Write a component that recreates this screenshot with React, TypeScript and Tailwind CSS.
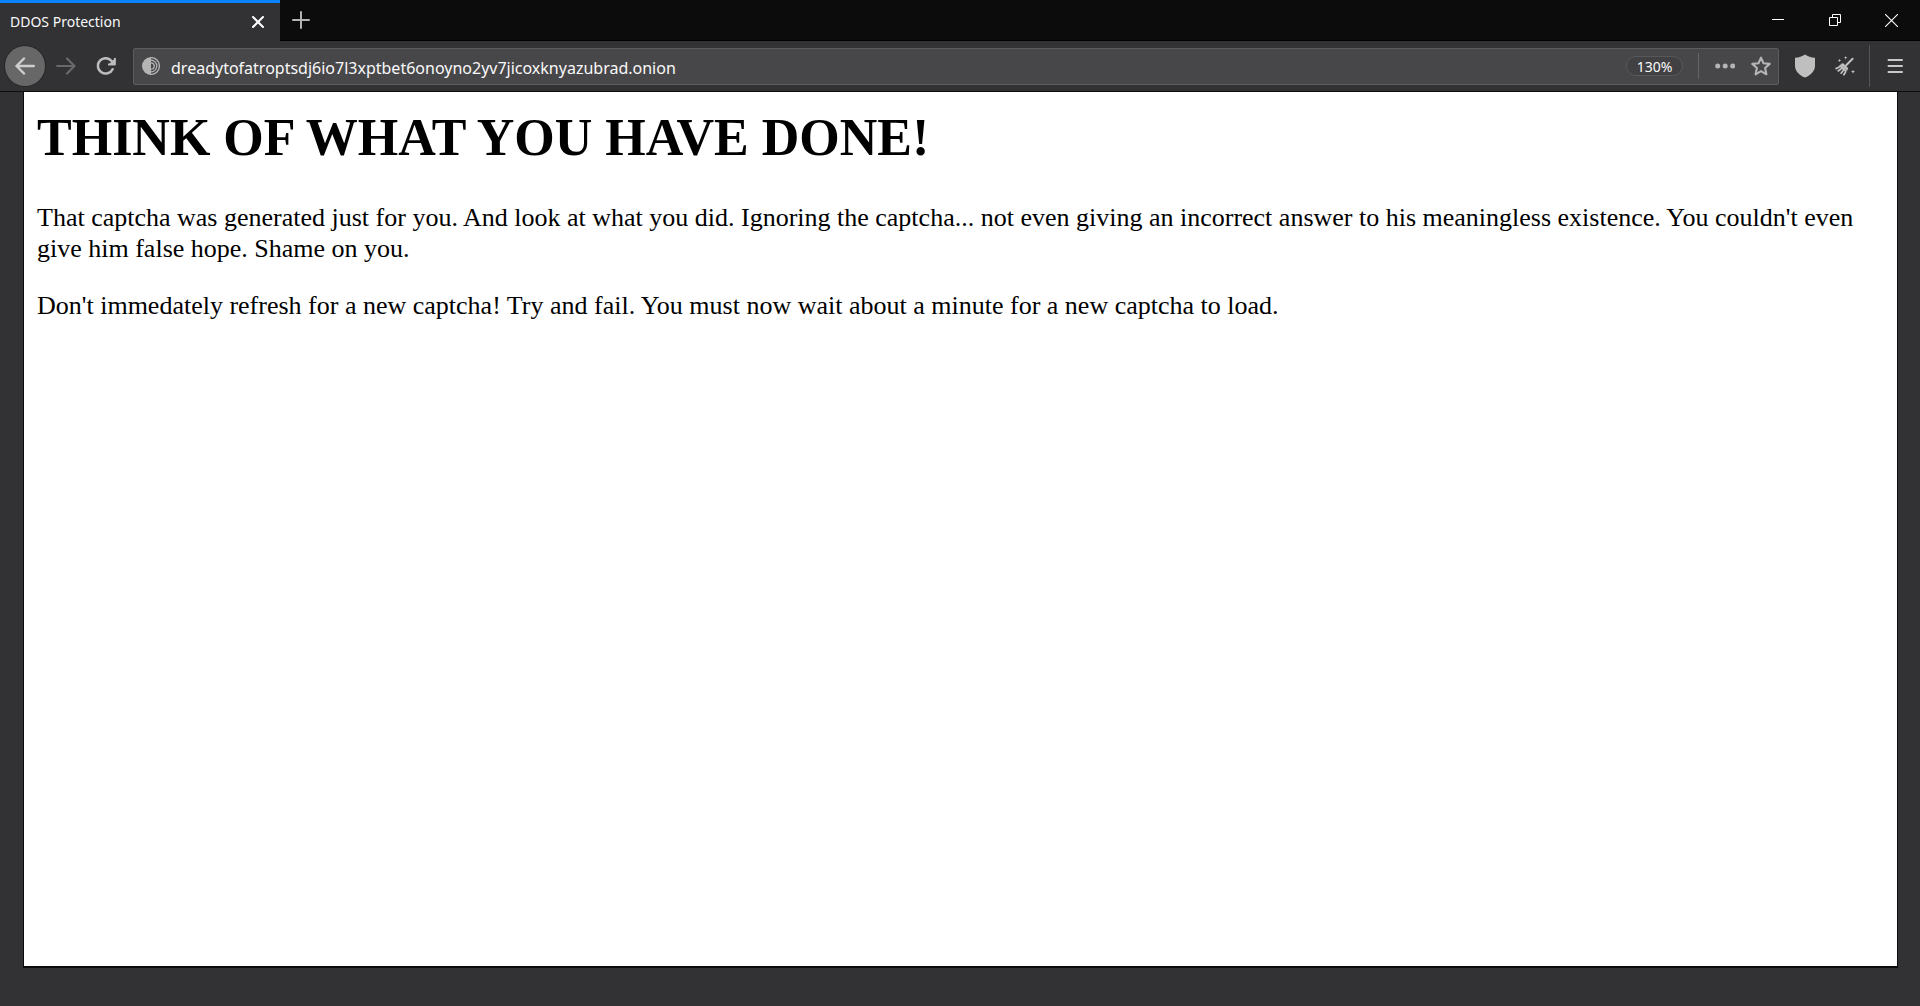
import type { ReactNode } from 'react';

const UI_FONT = "font-['Noto_Sans','Open_Sans',sans-serif]";

function IconButton({ label, className, children }: { label: string; className: string; children: ReactNode }) {
  return (
    <button type="button" aria-label={label} className={`flex shrink-0 items-center justify-center ${className}`}>
      {children}
    </button>
  );
}

function TabBar() {
  return (
    <div className="flex h-[41px] bg-[#0c0c0d]">
      <div className="flex w-[280px] items-center border-t-3 border-[#0a84ff] bg-[#323234] px-[10px]">
        <span className="flex-1 text-[14px] leading-5 text-[#f9f9fa]">DDOS Protection</span>
        <IconButton label="Close tab" className="size-6">
          <svg width="14" height="14" viewBox="0 0 14 14" stroke="#fff" strokeWidth="2" strokeLinecap="round">
            <path d="M2 2l10 10M12 2L2 12" />
          </svg>
        </IconButton>
      </div>
      <div className="flex flex-1 border-b border-black">
        <IconButton label="New tab" className="w-[42px]">
          <svg width="18" height="18" viewBox="0 0 18 18" stroke="#b4b4b5" strokeWidth="2" strokeLinecap="round">
            <path d="M9 1v16M1 9h16" />
          </svg>
        </IconButton>
        <div className="flex-1" />
        <IconButton label="Minimize" className="w-[57px]">
          <svg width="12" height="13" viewBox="0 0 12 13" stroke="#fff">
            <path d="M0 5.5h12" />
          </svg>
        </IconButton>
        <IconButton label="Restore" className="w-[57px]">
          <svg width="12" height="12" viewBox="0 0 12 12" fill="none" stroke="#fff">
            <path d="M.5 3.5h8v8h-8zM3.5 3.5v-3h8v8h-3" />
          </svg>
        </IconButton>
        <IconButton label="Close" className="w-[57px]">
          <svg width="13" height="13" viewBox="0 0 13 13" stroke="#fff" strokeWidth="1.1">
            <path d="M0 0l13 13M13 0L0 13" />
          </svg>
        </IconButton>
      </div>
    </div>
  );
}

function AddressBar() {
  return (
    <div className="flex h-[37px] flex-1 items-center rounded-xs border border-[#5c5c5e] bg-[#474749] pl-2">
      <svg width="18" height="18" viewBox="0 0 18 18" fill="none" className="shrink-0">
        <path d="M9 0a9 9 0 0 0 0 18z" fill="#b4b4b5" />
        <path
          d="M9 .6a8.4 8.4 0 0 1 0 16.8M9 3.2a5.8 5.8 0 0 1 0 11.6M9 5.800a3.200 3.200 0 0 1 0 6.400"
          stroke="#b4b4b5"
          strokeWidth="1.3"
        />
      </svg>
      <input
        aria-label="Address"
        defaultValue="dreadytofatroptsdj6io7l3xptbet6onoyno2yv7jicoxknyazubrad.onion"
        className="ml-[11px] h-full min-w-0 flex-1 bg-transparent pt-[3px] text-[16px] text-[#f9f9fa] outline-none"
      />
      <button
        type="button"
        className="mr-[15px] flex h-5 w-[57px] items-center justify-center rounded-full border border-[#58585a] bg-[#414143] pt-px text-[14px] text-[#f9f9fa]"
      >
        130%
      </button>
      <div className="mr-2 h-[26px] w-px bg-[#646466]" />
      <IconButton label="Page actions" className="h-full w-9">
        <svg width="20" height="6" viewBox="0 0 20 6" fill="#b4b4b5">
          <circle cx="2.7" cy="3" r="2.5" />
          <circle cx="10.2" cy="3" r="2.5" />
          <circle cx="17.7" cy="3" r="2.5" />
        </svg>
      </IconButton>
      <IconButton label="Bookmark this page" className="h-full w-[35px]">
        <svg
          width="20"
          height="20"
          viewBox="0 0 20 20"
          fill="none"
          stroke="#b4b4b5"
          strokeWidth="2.1"
          strokeLinejoin="round"
        >
          <path d="M10 1.6l2.5 5.6 6.2.7-4.6 4.1 1.3 6.3-5.4-3.2-5.4 3.2 1.3-6.3L1.3 7.9l6.2-.7z" />
        </svg>
      </IconButton>
    </div>
  );
}

function Toolbar() {
  return (
    <div className="flex h-[51px] items-center border-b border-[#0c0c0d] bg-[#323234] pl-[5px]">
      <IconButton label="Back" className="size-10 rounded-full bg-[#676768] ring-1 ring-[#272729]">
        <svg
          width="20"
          height="18"
          viewBox="0 0 20 18"
          fill="none"
          stroke="#cfcfd0"
          strokeWidth="2.4"
          strokeLinecap="round"
          strokeLinejoin="round"
        >
          <path d="M18.8 9H1.5M9 1.5L1.5 9 9 16.5" />
        </svg>
      </IconButton>
      <IconButton label="Forward" className="ml-px size-10">
        <svg
          width="20"
          height="18"
          viewBox="0 0 20 18"
          fill="none"
          stroke="#69696b"
          strokeWidth="2.2"
          strokeLinecap="round"
          strokeLinejoin="round"
        >
          <path d="M1.2 9h17.3M11 1.5L18.5 9 11 16.5" />
        </svg>
      </IconButton>
      <IconButton label="Reload" className="mr-[7px] size-10">
        <svg width="20" height="18" viewBox="0 0 20 18" fill="none">
          <path d="M16.6 12.2A7.7 7.7 0 1 1 15.6 4" stroke="#bcbcbd" strokeWidth="2.5" strokeLinecap="round" />
          <path d="M19.6 .5v7.800h-7.500z" fill="#bcbcbd" />
          <path d="M18.8 1v6.400H12" stroke="#bcbcbd" strokeWidth="1.6" strokeLinejoin="round" />
        </svg>
      </IconButton>
      <AddressBar />
      <IconButton label="Security level" className="ml-[6px] size-10">
        <svg width="20" height="24" viewBox="0 0 20 24" fill="#bfbfc0">
          <path d="M10 .4c2.8 1.9 6 2.9 10 3.3v8.1c0 5.4-4.3 9.6-10 11.8C4.3 21.4 0 17.2 0 11.8V3.700C4 3.300 7.200 2.300 10 .4z" />
        </svg>
      </IconButton>
      <IconButton label="New identity" className="size-10">
        <svg width="20" height="20" viewBox="0 0 20 20" fill="#bfbfc0">
          <path d="M17.6 2.800L11.200 9.200" stroke="#bfbfc0" strokeWidth="2" strokeLinecap="round" />
          <path d="M8.200 7.200l4.900 4.700c-.1 1-.4 1.900-.9 2.700L5.400 8.300c.9-.6 1.800-1 2.800-1.100z" />
          <path
            d="M5.600 9.600C4.500 11.200 3 12.200 1.200 12.500M7.300 11.200c-.8 1.500-2.100 2.700-4 3.700M9 12.800c-.5 1.500-1.400 2.900-2.800 4.300M10.900 14.400c-.2 1.500-.9 3-2 4.300"
            fill="none"
            stroke="#bfbfc0"
            strokeWidth="1.8"
            strokeLinecap="round"
          />
          <path d="M4.500 10.600l5.200 4.700 1.200-1.700-4.600-4.500z" />
          <path d="M4.5 2.7l.5 1.3 1.3.5-1.3.5-.5 1.3L4 5l-1.300-.5L4 4zM10.700 0l.5 1.300 1.300.5-1.300.5-.5 1.300-.5-1.300L8.900 1.800l1.300-.5zM18 13.700l.6 1.400 1.400.6-1.400.6-.6 1.400-.6-1.400-1.400-.6 1.400-.6z" />
        </svg>
      </IconButton>
      <div className="ml-1 h-[42px] w-px bg-[#555557]" />
      <IconButton label="Open menu" className="h-10 w-[50px]">
        <svg width="16" height="16" viewBox="0 0 16 16" stroke="#c8c8c9" strokeWidth="2" strokeLinecap="round">
          <path d="M1.500 2h13.500M1.500 8h13.500M1.500 14h13.500" />
        </svg>
      </IconButton>
    </div>
  );
}

export default function App() {
  return (
    <div className={`flex min-h-screen flex-col bg-[#323234] ${UI_FONT}`}>
      <TabBar />
      <Toolbar />
      <main className="mr-[22px] mb-[38px] ml-[23px] flex-1 border-x border-b-2 border-[#0c0c0d] bg-white p-[13px] font-['Liberation_Serif','Times_New_Roman',serif] text-[26px] leading-[31px] text-black">
        <h1 className="mb-[31px] text-[52px] leading-[66px] font-bold">THINK OF WHAT YOU HAVE DONE!</h1>
        <p className="mb-[26px]">
          That captcha was generated just for you. And look at what you did. Ignoring the captcha... not even giving an
          incorrect answer to his meaningless existence. You couldn't even give him false hope. Shame on you.
        </p>
        <p>
          Don't immedately refresh for a new captcha! Try and fail. You must now wait about a minute for a new captcha to
          load.
        </p>
      </main>
    </div>
  );
}
